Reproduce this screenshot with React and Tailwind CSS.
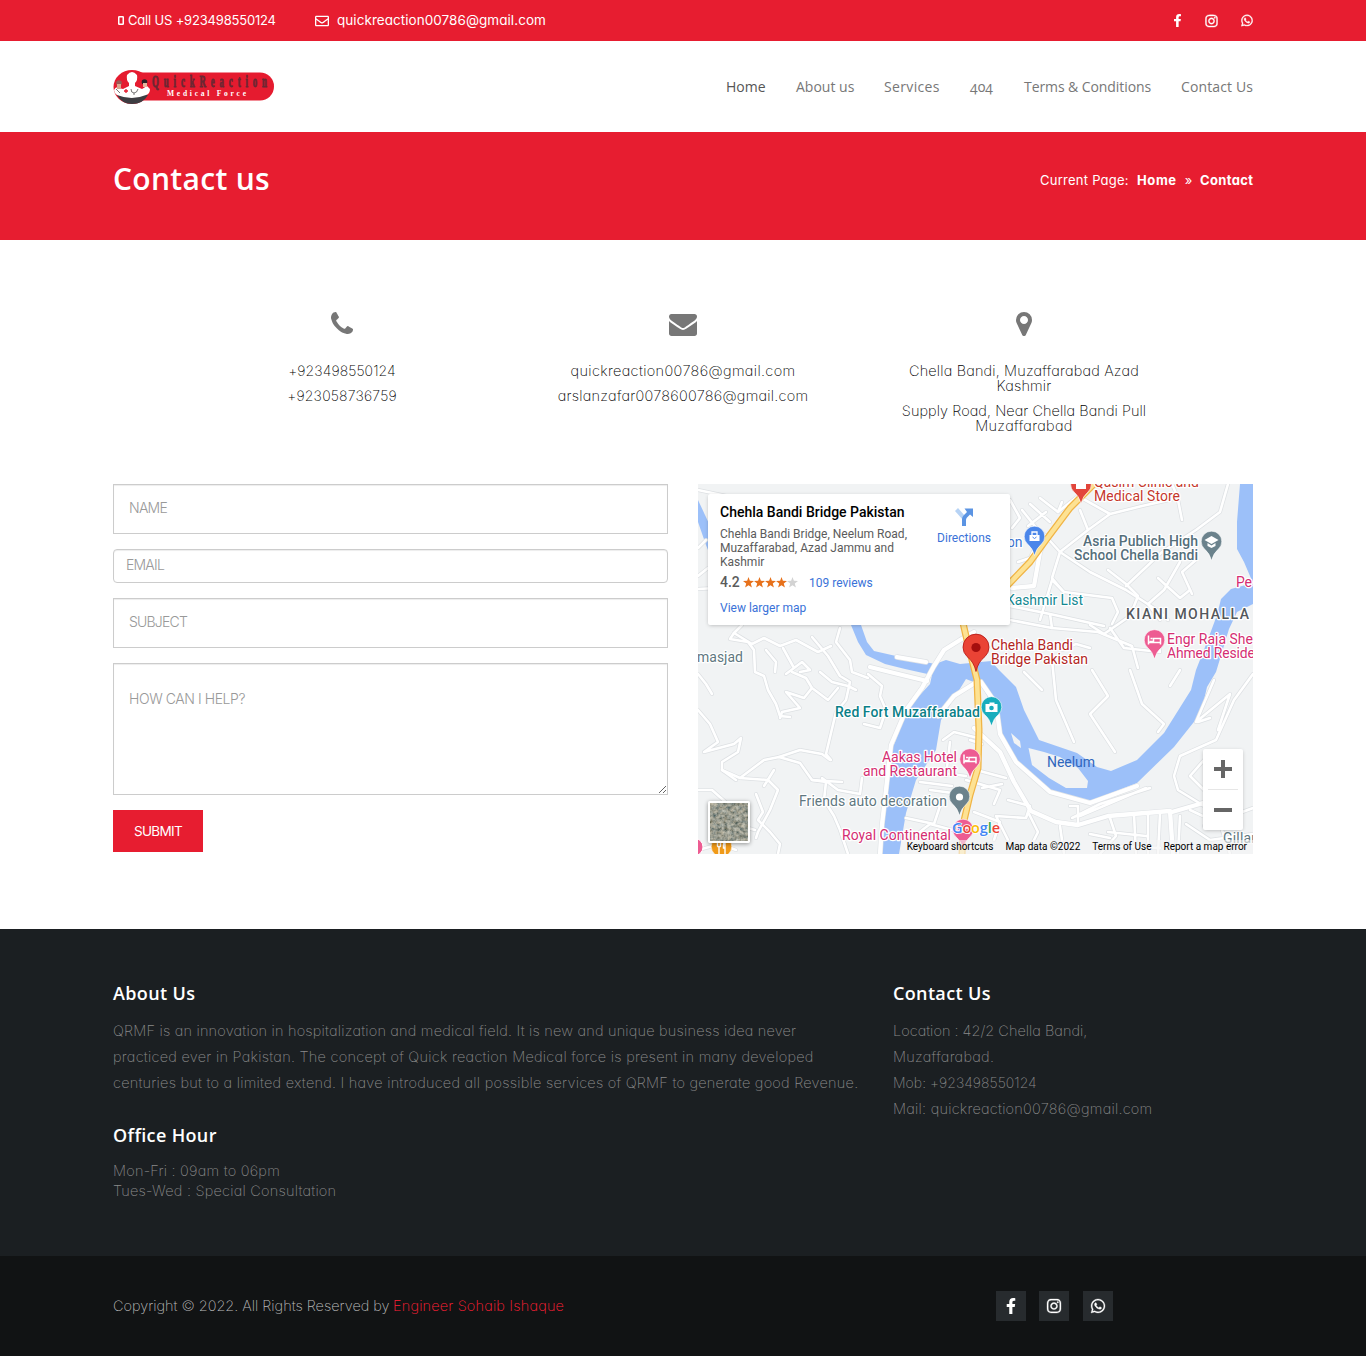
import { FaFacebookF, FaInstagram, FaWhatsapp, FaRegEnvelope } from 'react-icons/fa';

const poppins = "font-['Inter',sans-serif] [font-feature-settings:'cv11']";
const raleway = "font-['Open_Sans',sans-serif]";

function TopBar() {
  return (
    <div className="h-[41px] bg-[#e71d30]">
      <div className={`mx-auto flex h-[41px] w-[1140px] items-center justify-between text-[13px] text-white ${poppins}`}>
        <div className="flex items-center">
          <svg className="mr-[4px] ml-[5px] h-[9px] w-[6px]" viewBox="0 0 6 9" fill="none" stroke="#fff">
            <rect x=".75" y=".75" width="4.5" height="7.5" rx=".5" strokeWidth="1.5" />
          </svg>
          <span className="w-[187px] whitespace-nowrap tracking-[-0.18px]">Call US +923498550124</span>
          <FaRegEnvelope className="mr-[8px] h-[14px] w-[14px]" />
          <span className="text-[13.5px] whitespace-nowrap tracking-[0.05px]">quickreaction00786@gmail.com</span>
        </div>
        <div className="flex items-center gap-[23px]">
          <FaFacebookF className="h-[13px] w-[9px]" />
          <FaInstagram className="h-[14px] w-[13px]" stroke="#fff" strokeWidth="14" />
          <FaWhatsapp className="h-[13px] w-[12px]" stroke="#fff" strokeWidth="14" />
        </div>
      </div>
    </div>
  );
}

function Logo() {
  return (
    <svg className="h-[36px] w-[162px]" viewBox="0 0 162 36">
      <rect x="14" y="3.5" width="147" height="28" rx="14" fill="#e51b2f" />
      <ellipse cx="19" cy="18" rx="18.500" ry="17" fill="#e51b2f" />
      <path d="M4 26Q19 21 35 26Q30 35 19 35Q9 35 4 26Z" fill="#3d3d42" />
      <path d="M1 21Q3 17 6 19L10 20L16 17V14Q13 11 14 6Q19 0 24 6Q25 11 22 14V17L29 20L34 17L37 20Q37 25 33 26Q19 32 4 26Q1 24 1 21Z" fill="#fff" />
      <circle cx="6" cy="14" r="2.800" fill="#9b5a55" />
      <path d="M4 15h4v5H4z" fill="#d9a58d" />
      <circle cx="31.500" cy="13" r="2.800" fill="#2c2226" />
      <path d="M30 14h4v4h-4z" fill="#e6b79e" />
      <path d="M3 20l4 4M18 20q0 4 3 4t4-4M21 24v2" fill="none" stroke="#555" strokeWidth=".8" />
      <path d="M11 22h4M13 20v4" stroke="#e51b2f" strokeWidth="1.300" />
      <g transform="scale(.55 1)">
        <text x="71" y="18.500" textLength="209" fontFamily="Liberation Serif, serif" fontWeight="700" fontSize="16" fill="#6b2733" stroke="#6b2733" strokeWidth=".9">QuickReaction</text>
      </g>
      <text x="54" y="26.500" textLength="79" fontFamily="Liberation Serif, serif" fontWeight="700" fontSize="7.500" fill="#fff">Medical Force</text>
    </svg>
  );
}

function Header() {
  return (
    <header className="h-[91px] bg-white">
      <div className={`mx-auto flex h-[91px] w-[1140px] items-center justify-between text-[14px] text-[#777] ${raleway}`}>
        <Logo />
        <nav className="flex gap-[30px] whitespace-nowrap">
          <a className="w-[40px] text-[#555]">Home</a>
          <a className="w-[58px]">About us</a>
          <a className="w-[56px] tracking-[0.35px]">Services</a>
          <a className="w-[24px] [font-feature-settings:'onum']">404</a>
          <a className="w-[127px] tracking-[-0.08px]">Terms &amp; Conditions</a>
          <a className="w-[72px] tracking-[0.12px]">Contact Us</a>
        </nav>
      </div>
    </header>
  );
}

function Banner() {
  return (
    <section className="h-[108px] bg-[#e71d30] text-white">
      <div className="mx-auto flex h-[92px] w-[1140px] items-center justify-between">
        <h1 className={`text-[30px] font-semibold tracking-[0.31px] ${raleway}`}>Contact us</h1>
        <div className={`mt-[5px] flex text-[13px] whitespace-nowrap ${poppins}`}>
          <span className="w-[97px] tracking-[0.25px]">Current Page:</span>
          <b className="w-[40px] tracking-[0.6px]">Home</b>
          <span className="w-[23px] text-center">»</span>
          <b className="w-[53px] tracking-[0.36px]">Contact</b>
        </div>
      </div>
    </section>
  );
}

const phonePath =
  'M1600 1240q0 27-10 70.5t-21 68.5q-21 50-122 106-94 51-186 51-27 0-53-3.5t-57.5-12.5-47-14.5-55.5-20.5-49-18q-98-35-175-83-127-79-264-216t-216-264q-48-77-83-175-3-9-18-49t-20.5-55.5-14.5-47-12.5-57.5-3.5-53q0-92 51-186 56-101 106-122 25-11 68.5-21t70.5-10q14 0 21 3 18 6 53 76 11 19 30 54t35 63.5 31 53.5q3 4 17.5 25t21.5 35.5 7 28.5q0 20-28.5 50t-62 55-62 53-28.5 46q0 9 5 22.5t8.5 20.5 14 24 11.5 19q76 137 174 235t235 174q2 1 19 11.5t24 14 20.5 8.5 22.5 5q18 0 46-28.5t53-62 55-62 50-28.5q14 0 28.5 7t35.5 21.5 25 17.5q25 15 53.5 31t63.5 35 54 30q70 35 76 53 3 7 3 21z';
const mailPath =
  'M1792 710v794q0 66-47 113t-113 47h-1472q-66 0-113-47t-47-113v-794q44 49 101 87 362 246 497 345 57 42 92.5 65.5t94.5 48 110 24.5h2q51 0 110-24.5t94.5-48 92.5-65.5q170-123 498-345 57-39 100-87zm0-294q0 79-49 151t-122 123q-376 261-468 325-10 7-42.5 31t-54 38.5-52 32.5-57.5 27-50 9h-2q-23 0-50-9t-57.5-27-52-32.5-54-38.5-42.5-31q-91-64-262-182.5t-205-142.5q-62-42-117-115.5t-55-136.5q0-78 41.5-130t118.5-52h1472q65 0 112.5 47t47.5 113z';
const markerPath =
  'M1152 640q0-106-75-181t-181-75-181 75-75 181 75 181 181 75 181-75 75-181zm256 0q0 109-33 179l-364 774q-16 33-47.5 52t-67.5 19-67.5-19-46.5-52l-365-774q-33-70-33-179 0-212 150-362t362-150 362 150 150 362z';

function InfoColumn({ path, children }) {
  return (
    <div className="flex w-[341px] flex-col items-center gap-[10px] text-center">
      <svg className="mb-[15px] h-[28px] w-[28px]" viewBox="0 0 1792 1792" fill="#777">
        <path d={path} />
      </svg>
      {children}
    </div>
  );
}

function ContactInfo() {
  return (
    <section className={`mx-auto flex h-[174px] w-[1023px] text-[14.5px] leading-[15px] font-extralight whitespace-nowrap text-black ${poppins}`}>
      <InfoColumn path={phonePath}>
        <p className="text-[14px] tracking-[0.1px]">+923498550124</p>
        <p className="text-[14px] tracking-[0.2px]">+923058736759</p>
      </InfoColumn>
      <InfoColumn path={mailPath}>
        <p className="tracking-[0.35px]">quickreaction00786@gmail.com</p>
        <p className="tracking-[0.24px]">arslanzafar0078600786@gmail.com</p>
      </InfoColumn>
      <InfoColumn path={markerPath}>
        <p className="tracking-[0.16px]">Chella Bandi, Muzaffarabad Azad<br />Kashmir</p>
        <p className="tracking-[0.05px]">
          Supply Road, Near Chella Bandi Pull<br />
          <span className="tracking-[0.3px]">Muzaffarabad</span>
        </p>
      </InfoColumn>
    </section>
  );
}

function ContactForm() {
  const field = 'block w-full border border-[#ccc] shadow-[inset_0_1px_1px_rgba(0,0,0,0.075)] placeholder:text-[#999] outline-none';
  return (
    <form className={`flex w-[555px] flex-col gap-[15px] text-[14px] font-light ${poppins}`}>
      <input className={`${field} h-[50px] px-[15px] pb-[4px] tracking-[-0.75px]`} placeholder="NAME" />
      <input className={`${field} h-[34px] rounded-[4px] px-[12px] pb-[4px] tracking-[-0.79px]`} placeholder="EMAIL" />
      <input className={`${field} h-[50px] px-[15px] pb-[4px] tracking-[-0.8px]`} placeholder="SUBJECT" />
      <textarea className={`${field} h-[132px] resize-y px-[15px] pt-[25px] leading-[20px] tracking-[-0.43px]`} placeholder="HOW CAN I HELP?" />
      <button type="button" className="h-[42px] w-[90px] bg-[#e71d30] text-[13.5px] font-normal tracking-[-0.7px] text-white">SUBMIT</button>
    </form>
  );
}

const minorRoads = [
  'M698 589L716 588L728 580M698 576L708 568M698 548L706 540M698 490L745 500',
  'M742 625L734 633L752 644L764 638L780 646L796 640L818 652L831 646',
  'M734 633L730 639L748 642L754 650L755 672L764 676L768 690L776 704L780 716L790 717',
  'M766 650L776 662L775 672M783 648L794 668L802 662L810 670L800 672M794 668L786 674',
  'M812 637L828 656L840 676L850 682L846 700L836 712L826 754L831 760',
  'M792 672L806 678L812 688L804 698L786 692M786 692L800 708L782 712L780 718M812 688L828 700L838 688',
  'M840 628L836 642L850 660L852 672L868 678M868 674L882 686L880 696L886 710L880 728L864 724',
  'M820 672L832 682L848 686L856 690M698 674L706 684L712 694',
  'M698 710L710 724L718 742L704 752L734 744L741 738L738 752L722 762L722 770L740 778L764 760L779 757L800 763L812 780L826 782L824 800L834 816L840 830L848 854',
  'M779 757L800 750L822 754L830 760M740 778L768 780L778 790L770 810L758 832L756 838M722 770L736 780M764 786L774 770',
  'M756 794L763 812L758 820L770 832L780 844L778 854M698 790L712 790L730 806L734 824L755 830',
  'M822 778L838 790L860 794L862 778M812 780L842 782M698 850L720 844L736 850',
  'M1018 562L1030 558L1042 532L1060 552L1090 572L1126 590L1160 612L1168 620',
  'M1040 498L1058 512L1062 502M1030 504L1050 522M1046 512L1028 526M1022 510L1038 530M1010 500L1020 518L1012 528',
  'M1058 512L1078 496L1110 514L1088 530L1080 510M1088 530L1060 552L1052 578L1062 590M1110 514L1142 506L1178 498L1172 484',
  'M1108 570L1126 584L1138 596L1130 616L1104 634L1090 625M1158 578L1180 598L1190 590M1126 586L1162 552L1196 530L1220 512L1228 484',
  'M1178 500L1182 520M1180 562L1164 590L1148 604L1160 620M1196 560L1182 572L1192 594',
  'M1040 620L1052 580L1064 592L1112 598L1118 612L1112 624M1010 606L1050 614L1104 626M1050 614L1052 628L1010 620',
  'M1052 628L1098 632L1132 646L1138 668M1062 650L1076 644L1090 648M1110 628L1124 648L1160 652L1158 640',
  'M1024 672L1042 690M1052 660L1056 700L1074 742M1092 670L1108 696L1090 714L1115 752M1130 670L1142 704L1164 724L1158 732M1180 670L1170 686',
  'M1214 680L1196 722L1230 694L1218 730M1198 722L1210 718M1253 674L1234 700L1216 740L1180 756L1174 776L1178 790L1204 806M1190 776L1204 760M1190 776L1210 796',
  'M970 740L982 744M966 780L1000 790L994 804M976 770L1006 778M982 788L1002 784M1008 800L1030 806L1026 818L996 816L1008 840M1028 812L1038 832L1030 848',
  'M974 812L1000 822L994 840M1070 806L1078 806V824M1072 818L1100 804L1150 788M1080 816L1146 788M1060 826L1064 854',
  'M1110 818L1116 836L1100 854M1134 814L1136 854M1148 814V854M1108 832L1146 836M1120 846L1160 848M1160 814L1158 854M1180 816L1178 854',
  'M1090 834L1110 838M1186 824L1210 840L1253 834M1190 810L1220 824L1230 854M1204 826L1253 808',
  'M943 740L954 732L978 738M936 772L966 776M930 790L960 794M920 782L952 786M918 800L940 806L934 824L906 818M912 838L930 824L960 832M950 742L946 776',
];

const majorRoads = [
  'M897 657L926 662',
  'M870 667L890 672L927 681',
  'M981 682L996 704L1000 734L1016 762L1050 792L1090 803L1137 786',
  'M880 854L882 824L886 790L891 745L906 710L922 688L934 666L944 650L960 640L974 632',
  'M974 728L1000 752L1014 782L1031 811L1056 822L1078 825L1108 816L1170 811L1173 854M1172 812L1203 803',
  'M1012 588L1034 586L1040 552L1046 536',
  'M938 716L954 696L975 683',
];

const labels = [
  { x: 1094, y: 487, t: 'Qasim Clinic and', c: '#c5372c', w: 105 },
  { x: 1094, y: 501, t: 'Medical Store', c: '#c5372c', w: 86 },
  { x: 1007, y: 547, t: 'on', c: '#3c76d3', w: 15.5 },
  { x: 1083, y: 545.500, t: 'Asria Publich High', c: '#546e7a', w: 115, b: 1 },
  { x: 1074, y: 559.500, t: 'School Chella Bandi', c: '#546e7a', w: 124, b: 1 },
  { x: 1006, y: 605, t: 'Kashmir List', c: '#138891', w: 77 },
  { x: 1236, y: 587, t: 'Pe', c: '#d52e72', w: 16 },
  { x: 1126, y: 619, t: 'KIANI MOHALLA', c: '#53575b', w: 123, b: 1 },
  { x: 1167, y: 643.500, t: 'Engr Raja She', c: '#d52e72', w: 86 },
  { x: 1167, y: 657.500, t: 'Ahmed Reside', c: '#d52e72', w: 88 },
  { x: 991, y: 650, t: 'Chehla Bandi', c: '#b3261e', w: 82 },
  { x: 991, y: 664, t: 'Bridge Pakistan', c: '#b3261e', w: 97 },
  { x: 697, y: 662, t: 'masjad', c: '#607780', w: 46 },
  { x: 835, y: 717, t: 'Red Fort Muzaffarabad', c: '#0b8087', w: 145, b: 1 },
  { x: 882, y: 762, t: 'Aakas Hotel', c: '#d52e72', w: 75 },
  { x: 863, y: 776, t: 'and Restaurant', c: '#d52e72', w: 94 },
  { x: 799, y: 806, t: 'Friends auto decoration', c: '#607780', w: 148 },
  { x: 842, y: 840, t: 'Royal Continental', c: '#d52e72', w: 109 },
  { x: 1047, y: 767, t: 'Neelum', c: '#2f66bd', w: 48, river: 1 },
  { x: 1223, y: 843, t: 'Gillan', c: '#607780', w: 36 },
];

function Pin({ x, y, color, children }) {
  return (
    <g transform={`translate(${x} ${y})`}>
      <path d="M0 18.500Q-2 11-7 7A10.300 10.300 0 1 1 7 7Q2 11 0 18.500Z" fill={color} stroke="#fff" strokeWidth=".6" />
      {children}
    </g>
  );
}

const bed = <path d="M-6-5V4M-6 2H6V4M6 2V-2H-1V1H-5M-4-2H-2" fill="none" stroke="#fff" strokeWidth="1.500" />;

function MapCanvas() {
  return (
    <svg className="block h-[370px] w-[555px]" viewBox="698 484 555 370">
      <rect x="698" y="484" width="555" height="370" fill="#f1f3f4" />
      <path d="M698 500L712 530V560L706 545L698 522Z" fill="#9cc0f9" />
      <path
        d="M851 625L861 625L867 642L874 651L896 656L935 664L946 660L960 664L991 661L999 670L1016 687L1024 710L1039 740L1077 753L1097 767L1111 771L1137 760L1164 733L1191 690L1196 670L1207 642L1217 615L1221 599L1231 589L1253 583V604L1237 612L1229 629L1216 672L1207 687L1201 713L1174 747L1137 783L1091 801L1051 793L1017 763L999 733L994 708L981 685L966 679L953 700L941 720L936 750L916 780L906 813L899 854H881L888 780L893 747L909 707L930 684L932 675L905 669L885 664L866 655L858 642Z"
        fill="#9cc0f9"
      />
      <path d="M1240 484H1253V583L1244 562L1237 549V522Z" fill="#9cc0f9" />
      <g fill="none" strokeLinejoin="round" strokeLinecap="round">
        {minorRoads.map((d) => <path key={d} d={d} stroke="#dde0e3" strokeWidth="4" />)}
        {majorRoads.map((d) => <path key={d} d={d} stroke="#dfe2e5" strokeWidth="5.500" />)}
        {minorRoads.map((d) => <path key={d} d={d} stroke="#fff" strokeWidth="2.600" />)}
        {majorRoads.map((d) => <path key={d} d={d} stroke="#fff" strokeWidth="4.300" />)}
        <path d="M1096 482L1070 508L1046 540L1030 562L1005 588L960 610L966 636L977 680L979 730L978 768L970 795L963 825L962 856" stroke="#f0b445" strokeWidth="7" />
        <path d="M1096 482L1070 508L1046 540L1030 562L1005 588L960 610L966 636L977 680L979 730L978 768L970 795L963 825L962 856" stroke="#fde293" strokeWidth="4.500" />
      </g>
      <path d="M1028.500 748L1044 752L1060 757L1078 768L1088 781L1087 788H1066L1049 778L1032 765ZM1011 733L1020 741L1021 748L1014 743Z" fill="#f1f3f4" />
      <g fontFamily="Roboto, sans-serif" fontSize="14" stroke="#fff" strokeLinejoin="round">
        {labels.map((l) => (
          <text key={l.t} x={l.x} y={l.y} fill={l.c} textLength={l.w} fontWeight={l.b ? 500 : 400} strokeWidth={l.river ? 0 : 2.5} style={{ paintOrder: 'stroke' }}>{l.t}</text>
        ))}
      </g>
      <Pin x={1081} y={485} color="#e2453b"><path d="M-5-5h10v9H-5z" fill="#fff" /></Pin>
      <Pin x={1034.500} y={537} color="#4a86ea">
        <path d="M-5-2h10v6H-5z" fill="#fff" /><path d="M-2.500-2v-3h5v3" fill="none" stroke="#fff" strokeWidth="1.300" /><path d="M-2 0q2 3 4 0" fill="none" stroke="#4a86ea" />
      </Pin>
      <Pin x={1211.500} y={542} color="#6b828c"><path d="M-7-2L0-6L7-2L0 2ZM-4 1L0 3.500L4 1V4L0 6L-4 4Z" fill="#fff" /></Pin>
      <Pin x={1154.500} y={640.500} color="#ed5c92">{bed}</Pin>
      <Pin x={991.500} y={707.500} color="#18adbd"><rect x="-6" y="-3.500" width="12" height="8" fill="#fff" /><rect x="-2" y="-5" width="5" height="3" fill="#fff" /><circle cx="0" cy=".5" r="2.300" fill="#18adbd" /></Pin>
      <Pin x={970} y={759.500} color="#ed5c92">{bed}</Pin>
      <Pin x={959.500} y={797} color="#6b828c"><circle r="3.600" fill="#fff" /></Pin>
      <Pin x={963} y={830} color="#ed5c92">{bed}</Pin>
      <Pin x={721.500} y={847} color="#f09a18"><path d="M-4-5v4q1.500 2 3 0V-5M-2.500-1V7M3.500 7V-5Q1.500-4 2 1H3.500" fill="none" stroke="#fff" strokeWidth="1.400" /></Pin>
      <circle cx="694" cy="847" r="9" fill="#ed5c92" stroke="#fff" />
      <path d="M976 671.500Q974 662 967 656.500A13 13 0 1 1 985 656.500Q978 662 976 671.500Z" fill="#ea4335" stroke="#b31412" strokeWidth=".8" />
      <circle cx="976" cy="647.500" r="4.600" fill="#a50e0e" />
      <text x="952" y="832.500" fontFamily="Open Sans, sans-serif" fontWeight="600" fontSize="14.500" textLength="48" stroke="#fff" strokeWidth="1.500" style={{ paintOrder: 'stroke' }}>
        <tspan fill="#4285f4">G</tspan><tspan fill="#ea4335">o</tspan><tspan fill="#fbbc04">o</tspan><tspan fill="#4285f4">g</tspan><tspan fill="#34a853">l</tspan><tspan fill="#ea4335">e</tspan>
      </text>
    </svg>
  );
}

function Star({ color }) {
  return (
    <svg className="h-[11px] w-[11px]" viewBox="0 0 24 24" fill={color}>
      <path d="M12 0l3 8.300 9 .4-7 5.600 2.400 8.700L12 18l-7.400 5L7 14.300 0 8.700l9-.4z" />
    </svg>
  );
}

function PlaceCard() {
  return (
    <div className="absolute top-[10px] left-[10px] flex h-[131px] w-[302px] justify-between rounded-[2px] bg-white pr-[19px] pl-[12px] text-[12px] leading-[14px] whitespace-nowrap text-[#5b5b5b] shadow-[0_1px_4px_-1px_rgba(0,0,0,0.3)]">
      <div>
        <div className="mt-[9px] text-[14px] leading-[18px] font-medium text-black">Chehla Bandi Bridge Pakistan</div>
        <div className="mt-[6px]">Chehla Bandi Bridge, Neelum Road,<br />Muzaffarabad, Azad Jammu and<br />Kashmir</div>
        <div className="mt-[6px] flex h-[14px] items-center">
          <span className="w-[23px] text-[14px] font-medium">4.2</span>
          <Star color="#e7711b" /><Star color="#e7711b" /><Star color="#e7711b" /><Star color="#e7711b" /><Star color="#d3d3d3" />
          <span className="ml-[11px] pt-px text-[#3a72d8]">109 reviews</span>
        </div>
        <div className="mt-[12px] text-[#3a72d8]">View larger map</div>
      </div>
      <div className="flex flex-col items-center pt-[13px] text-[#3a72d8]">
        <svg className="h-[20px] w-[20px]" viewBox="0 0 20 20">
          <path d="M1 4L4 1L11 9L9 13Z" fill="#b7d3f5" />
          <path d="M8 19V12Q8 10 10 8L13 5L10.500 1.500H19V10L16 7.500L13 10.500Q12 11.500 12 13V19Z" fill="#5b94e3" />
        </svg>
        <span className="mt-[4px]">Directions</span>
      </div>
    </div>
  );
}

function MapPanel() {
  return (
    <div className="relative h-[370px] w-[555px] overflow-hidden font-['Roboto',sans-serif]">
      <MapCanvas />
      <PlaceCard />
      <div className="absolute top-[265px] left-[505px] flex h-[81px] w-[40px] flex-col items-center rounded-[2px] bg-white shadow-[0_1px_4px_-1px_rgba(0,0,0,0.3)]">
        <svg className="h-[40px] w-[40px]" viewBox="0 0 40 40"><path d="M11 20H29M20 11V29" stroke="#666" strokeWidth="4" /></svg>
        <div className="h-px w-[30px] bg-[#e6e6e6]" />
        <svg className="h-[40px] w-[40px]" viewBox="0 0 40 40"><path d="M11 20H29" stroke="#666" strokeWidth="4" /></svg>
      </div>
      <svg className="absolute top-[317px] left-[10px] h-[42px] w-[42px] rounded-[2px] border-2 border-white shadow-[0_1px_4px_rgba(0,0,0,0.4)]" viewBox="0 0 38 38">
        <filter id="terrain"><feTurbulence type="fractalNoise" baseFrequency=".28" numOctaves="4" seed="8" /><feColorMatrix values=".7 0 0 0 -.03  .62 0 .08 0 -.02  .5 0 .15 0 -.05  0 0 0 0 1" /></filter>
        <rect width="38" height="38" fill="#87887a" />
        <rect width="38" height="38" filter="url(#terrain)" />
      </svg>
      <div className="absolute right-0 bottom-0 flex h-[14px] items-center gap-[12px] bg-[#f5f5f5]/60 pr-[6px] pb-px pl-[6px] text-[10px] whitespace-nowrap text-black">
        <span>Keyboard shortcuts</span><span>Map data ©2022</span><span>Terms of Use</span><span>Report a map error</span>
      </div>
    </div>
  );
}

function Footer() {
  const heading = `text-[18px] leading-[26px] font-semibold tracking-[0.35px] text-white ${raleway}`;
  return (
    <footer className={`text-[14.5px] font-extralight whitespace-nowrap text-[#8a8a8a] ${poppins}`}>
      <div className="h-[327px] bg-[#1b1f22] pt-[51px]">
        <div className="mx-auto flex w-[1140px]">
          <div className="w-[780px]">
            <h3 className={heading}>About Us</h3>
            <div className="mt-[12px] leading-[26px]">
              <p className="tracking-[0.19px]">QRMF is an innovation in hospitalization and medical field. It is new and unique business idea never</p>
              <p className="tracking-[0.26px]">practiced ever in Pakistan. The concept of Quick reaction Medical force is present in many developed</p>
              <p className="tracking-[0.23px]">centuries but to a limited extend. I have introduced all possible services of QRMF to generate good Revenue.</p>
            </div>
            <h3 className={`${heading} mt-[26px]`}>Office Hour</h3>
            <div className="mt-[13px] leading-[20px] tracking-[0.22px]">
              <p>Mon-Fri : 09am to 06pm</p>
              <p>Tues-Wed : Special Consultation</p>
            </div>
          </div>
          <div>
            <h3 className={heading}>Contact Us</h3>
            <div className="mt-[12px] leading-[26px]">
              <p className="tracking-[0.01px]">Location : 42/2 Chella Bandi,</p>
              <p className="tracking-[0.25px]">Muzaffarabad.</p>
              <p className="text-[14px] tracking-[0.03px]">Mob: +923498550124</p>
              <p className="tracking-[0.24px]">Mail: quickreaction00786@gmail.com</p>
            </div>
          </div>
        </div>
      </div>
      <div className="h-[100px] bg-[#111314]">
        <div className="mx-auto flex h-[100px] w-[1140px] items-center justify-between">
          <p className="text-[#bbb]">
            <span className="inline-block w-[280px] tracking-[-0.02px]">Copyright © 2022. All Rights Reserved by</span>
            <span className="tracking-[0.17px] text-[#ff2036]">Engineer Sohaib Ishaque</span>
          </p>
          <div className="mr-[140px] flex text-[16px] text-white">
            <span className="mr-[13px] flex h-[30px] w-[30px] items-center justify-center bg-[#272b2e]"><FaFacebookF /></span>
            <span className="mr-[14px] flex h-[30px] w-[30px] items-center justify-center bg-[#272b2e]"><FaInstagram stroke="#fff" strokeWidth="10" /></span>
            <span className="flex h-[30px] w-[30px] items-center justify-center bg-[#272b2e]"><FaWhatsapp stroke="#fff" strokeWidth="10" /></span>
          </div>
        </div>
      </div>
    </footer>
  );
}

export default function App() {
  return (
    <div className="w-[1366px] bg-white">
      <TopBar />
      <Header />
      <Banner />
      <div className="h-[70px]" />
      <ContactInfo />
      <section className="mx-auto flex h-[445px] w-[1140px] gap-[30px]">
        <ContactForm />
        <MapPanel />
      </section>
      <Footer />
    </div>
  );
}
